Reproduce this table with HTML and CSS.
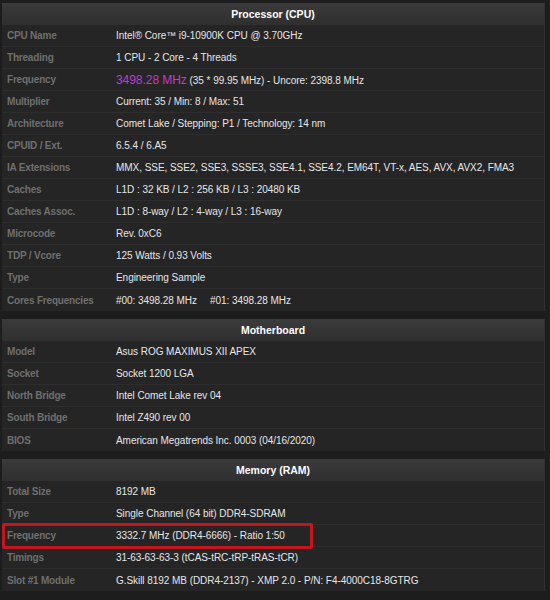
FILE: index.html
```html
<!DOCTYPE html>
<html lang="en">
<head>
  <meta charset="UTF-8">
  <title>CPU-Z Validator</title>
  <link rel="stylesheet" href="styles.css">
</head>
<body>
  <!-- Processor -->
  <div class="section">
    <div class="section-head">Processor (CPU)</div>
    <div class="row"><div class="label">CPU Name</div><div class="value">Intel® Core™ i9-10900K CPU @ 3.70GHz</div></div>
    <div class="row"><div class="label">Threading</div><div class="value">1 CPU - 2 Core - 4 Threads</div></div>
    <div class="row"><div class="label">Frequency</div><div class="value"><span class="freq">3498.28 MHz</span> (35 * 99.95 MHz) - Uncore: 2398.8 MHz</div></div>
    <div class="row"><div class="label">Multiplier</div><div class="value">Current: 35 / Min: 8 / Max: 51</div></div>
    <div class="row"><div class="label">Architecture</div><div class="value">Comet Lake / Stepping: P1 / Technology: 14 nm</div></div>
    <div class="row"><div class="label">CPUID / Ext.</div><div class="value">6.5.4 / 6.A5</div></div>
    <div class="row"><div class="label">IA Extensions</div><div class="value">MMX, SSE, SSE2, SSE3, SSSE3, SSE4.1, SSE4.2, EM64T, VT-x, AES, AVX, AVX2, FMA3</div></div>
    <div class="row"><div class="label">Caches</div><div class="value">L1D : 32 KB / L2 : 256 KB / L3 : 20480 KB</div></div>
    <div class="row"><div class="label">Caches Assoc.</div><div class="value">L1D : 8-way / L2 : 4-way / L3 : 16-way</div></div>
    <div class="row"><div class="label">Microcode</div><div class="value">Rev. 0xC6</div></div>
    <div class="row"><div class="label">TDP / Vcore</div><div class="value">125 Watts / 0.93 Volts</div></div>
    <div class="row"><div class="label">Type</div><div class="value">Engineering Sample</div></div>
    <div class="row"><div class="label">Cores Frequencies</div><div class="value"><span class="core">#00: 3498.28 MHz</span><span class="core">#01: 3498.28 MHz</span></div></div>
  </div>

  <!-- Motherboard -->
  <div class="section">
    <div class="section-head">Motherboard</div>
    <div class="row"><div class="label">Model</div><div class="value">Asus ROG MAXIMUS XII APEX</div></div>
    <div class="row"><div class="label">Socket</div><div class="value">Socket 1200 LGA</div></div>
    <div class="row"><div class="label">North Bridge</div><div class="value">Intel Comet Lake rev 04</div></div>
    <div class="row"><div class="label">South Bridge</div><div class="value">Intel Z490 rev 00</div></div>
    <div class="row"><div class="label">BIOS</div><div class="value">American Megatrends Inc. 0003 (04/16/2020)</div></div>
  </div>

  <!-- Memory -->
  <div class="section">
    <div class="section-head">Memory (RAM)</div>
    <div class="row"><div class="label">Total Size</div><div class="value">8192 MB</div></div>
    <div class="row"><div class="label">Type</div><div class="value">Single Channel (64 bit) DDR4-SDRAM</div></div>
    <div class="row marked"><div class="label">Frequency</div><div class="value">3332.7 MHz (DDR4-6666) - Ratio 1:50</div></div>
    <div class="row"><div class="label">Timings</div><div class="value">31-63-63-63-3 (tCAS-tRC-tRP-tRAS-tCR)</div></div>
    <div class="row"><div class="label">Slot #1 Module</div><div class="value">G.Skill 8192 MB (DDR4-2137) - XMP 2.0 - P/N: F4-4000C18-8GTRG</div></div>
  </div>
</body>
</html>
```

FILE: styles.css
```css
/* base */
body { margin: 0; padding: 3px 0 0 2px; background: #1d1d1d; font-family: "Liberation Sans", Arial, sans-serif; }
.section { width: 542px; background: #252525; border-right: 1px solid #333; margin-bottom: 8px; }
.section-head { height: 22px; line-height: 22px; text-align: center; font-size: 10.5px; font-weight: bold; color: #fff; background: linear-gradient(#3b3b3b, #2f2f2f); }
.row { display: grid; grid-template-columns: 109px 1fr; height: 22px; align-items: center; border-bottom: 1px solid #2d2d2d; box-sizing: border-box; }
.row:last-child { border-bottom: none; }
.label { padding-left: 5px; font-size: 10px; font-weight: bold; color: #6f6f6f; letter-spacing: -0.2px; }
.value { padding-left: 5px; font-size: 10px; color: #e6e6e6; white-space: nowrap; letter-spacing: -0.05px; }
.freq { font-size: 12px; color: #c43bc4; }
.core { margin-right: 13px; }
/* red annotation box */
.marked { position: relative; }
.marked::after { content: ""; position: absolute; left: 0; top: -2px; width: 305px; height: 20px; border: 3px solid #c4161c; border-radius: 2px; }
```
